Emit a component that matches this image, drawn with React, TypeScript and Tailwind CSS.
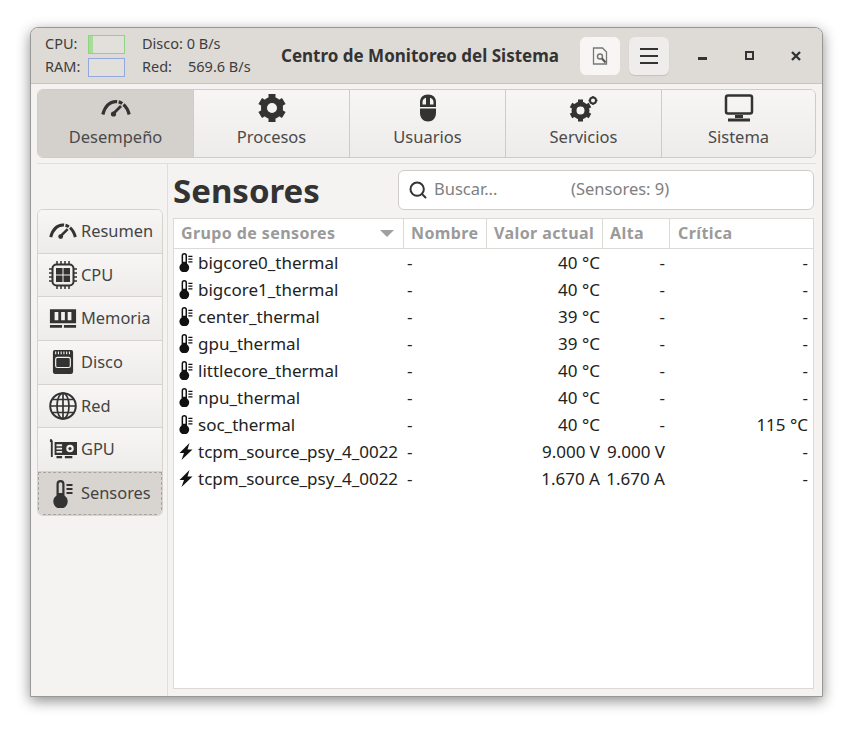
import { Search } from 'lucide-react';
import type { ReactNode } from 'react';

const font = { fontFamily: '"Noto Sans", sans-serif' };

function Gauge({ className }: { className: string }) {
    return (
        <svg viewBox="0 0 30 18" className={className} fill="none" stroke="#333333">
            <path d="M1.800 15.500 C4 7 9 2.800 15 2.500 C21 2.800 26 7 28.200 15.500" strokeWidth="3.200" strokeDasharray="21 1.500 4 1.500 30" />
            <path d="M20 7 L13 14" strokeWidth="2.800" />
            <circle cx="12.5" cy="15" r="2.6" fill="#333333" stroke="none" />
        </svg>
    );
}

function Gear({ className }: { className: string }) {
    return (
        <svg viewBox="0 0 28 30" className={className} fill="none" stroke="#333333">
            <circle cx="14" cy="15" r="8" strokeWidth="6" />
            <path d="M14 1v6M14 23v6M2.200 8l5 3M20.800 19l5 3M2.200 22l5-3M20.800 11l5-3" strokeWidth="7" />
        </svg>
    );
}

function Mouse({ className }: { className: string }) {
    return (
        <svg viewBox="0 0 18 28" className={className}>
            <path d="M9 0.5C4 0.5 1 3.5 1 8v11c0 5 3.5 8.5 8 8.5s8-3.5 8-8.5V8c0-4.500-3-7.500-8-7.500z" fill="#333333" />
            <path d="M3.500 10.500V8c0-2 1-3.500 3.500-4.300V10.500zM14.500 10.500V8c0-2-1-3.500-3.500-4.300V10.500z" fill="#f4f3f2" />
            <path d="M1 13h16v1.400H1z" fill="#f4f3f2" />
        </svg>
    );
}

function Gears({ className }: { className: string }) {
    return (
        <svg viewBox="0 0 30 28" className={className} fill="none" stroke="#333333">
            <circle cx="11.500" cy="16" r="6.500" strokeWidth="5" />
            <path d="M11.500 5v4M11.500 23v4M2 10.500l3.500 2M17.500 19.500l3.500 2M2 21.500l3.500-2M17.500 12.500l3.500-2" strokeWidth="5" />
            <circle cx="24" cy="6" r="3" strokeWidth="2" />
            <path d="M24 1.500v1.500M24 9v1.500M19.500 6H21M27 6h1.500" strokeWidth="1.500" />
        </svg>
    );
}

function Monitor({ className }: { className: string }) {
    return (
        <svg viewBox="0 0 30 28" className={className} fill="none">
            <rect x="2" y="1.500" width="26" height="18" rx="2" stroke="#333333" strokeWidth="2.500" />
            <path d="M11 21h8v3h-8z M4 24.500h22v3H4z" fill="#333333" />
        </svg>
    );
}

function Chip({ className }: { className: string }) {
    return (
        <svg viewBox="0 0 28 28" className={className} fill="none" stroke="#333333">
            <rect x="3.500" y="3.500" width="21" height="21" rx="4" strokeWidth="2" />
            <path d="M7 7h6.500v6.500H7zM14.500 7H21v6.500h-6.500zM7 14.500h6.500V21H7zM14.500 14.500H21V21h-6.500z" fill="#333333" stroke="none" />
            <path d="M8 0v3M12 0v3M16 0v3M20 0v3M8 25v3M12 25v3M16 25v3M20 25v3M0 8h3M0 12h3M0 16h3M0 20h3M25 8h3M25 12h3M25 16h3M25 20h3" strokeWidth="1.500" />
        </svg>
    );
}

function Ram({ className }: { className: string }) {
    return (
        <svg viewBox="0 0 30 22" className={className}>
            <path fillRule="evenodd" d="M1 1h28v15H1zM6 4v9h4V4zM13 4v9h4V4zM20 4v9h4V4z" fill="#333333" />
            <path d="M1 18h13v3H1zM16 18h13v3H16z" fill="#333333" />
        </svg>
    );
}

function Disk({ className }: { className: string }) {
    return (
        <svg viewBox="0 0 24 28" className={className}>
            <rect x="1" y="1" width="22" height="26" rx="2" fill="#333333" />
            <path d="M4 2.500v3M7 2.500v3M10 2.500v3M13 2.500v3M16 2.500v3M19 2.500v3" stroke="#f4f3f2" strokeWidth="1.200" />
            <rect x="4" y="9" width="16" height="11" rx="2" fill="none" stroke="#f4f3f2" strokeWidth="1.300" />
        </svg>
    );
}

function Globe({ className }: { className: string }) {
    return (
        <svg viewBox="0 0 28 28" className={className} fill="none" stroke="#333333" strokeWidth="1.700">
            <circle cx="14" cy="14" r="12.800" strokeWidth="2" />
            <ellipse cx="14" cy="14" rx="6" ry="12.800" />
            <path d="M14 1v26M1.500 14h25M3.500 7.500h21M3.500 20.500h21" />
        </svg>
    );
}

function Gpu({ className }: { className: string }) {
    return (
        <svg viewBox="0 0 30 22" className={className}>
            <path d="M1 0h2l1 2v17H2V3H1z" fill="#333333" />
            <path fillRule="evenodd" d="M6 3h24v14H6zM8 5.500v2h6v-2zM8 9v2h6V9zM8 12.500v2h6v-2zM22.500 6a4 4 0 1 0 0 8a4 4 0 0 0 0-8z" fill="#333333" />
            <circle cx="22.500" cy="10" r="1.700" fill="#333333" />
            <path d="M8 18h6v2.500H8zM17 18h8v2.500h-8z" fill="#333333" />
        </svg>
    );
}

function Thermo({ className, color = '#333333', hole = '#d8d4d0' }: { className: string; color?: string; hole?: string }) {
    return (
        <svg viewBox="0 0 20 28" className={className}>
            <path d="M3.500 4a4 4 0 0 1 8 0V15.400a7.200 7.200 0 1 1-8 0z" fill={color} />
            <path d="M5.700 4a1.800 1.800 0 0 1 3.600 0V13H5.700z" fill={hole} />
            <path d="M13.500 5h6M13.500 9h6M13.500 13h6" stroke={color} strokeWidth="1.800" />
        </svg>
    );
}

function Bolt({ className }: { className: string }) {
    return (
        <svg viewBox="0 0 14 17" className={className}>
            <path d="M10.500 0 L0.500 10 H5 L2.500 17 L13.500 6.500 H8.500 Z" fill="#111111" />
        </svg>
    );
}

function ReportIcon() {
    return (
        <svg viewBox="0 0 16 18" className="h-[18px] w-4" fill="none" stroke="#777777">
            <path d="M1.500 1h9l4 4v12h-13z" strokeWidth="1.300" />
            <circle cx="8" cy="9.500" r="2.500" strokeWidth="1.500" />
            <path d="M10 11.500l3.500 4" stroke="#555555" strokeWidth="2" />
        </svg>
    );
}

const tabs: { label: string; icon: ReactNode; width: string }[] = [
    { label: 'Desempeño', icon: <Gauge className="h-[18px] w-[30px]" />, width: 'w-[155px]' },
    { label: 'Procesos', icon: <Gear className="h-[30px] w-7" />, width: 'w-[156px]' },
    { label: 'Usuarios', icon: <Mouse className="h-7 w-[18px]" />, width: 'w-[156px]' },
    { label: 'Servicios', icon: <Gears className="h-[29px] w-[30px]" />, width: 'w-[156px]' },
    { label: 'Sistema', icon: <Monitor className="h-7 w-[30px]" />, width: 'flex-1' },
];

const sideItems: { label: string; icon: ReactNode }[] = [
    { label: 'Resumen', icon: <Gauge className="h-[18px] w-7" /> },
    { label: 'CPU', icon: <Chip className="h-7 w-7" /> },
    { label: 'Memoria', icon: <Ram className="h-[21px] w-7" /> },
    { label: 'Disco', icon: <Disk className="h-7 w-[22px]" /> },
    { label: 'Red', icon: <Globe className="h-7 w-7" /> },
    { label: 'GPU', icon: <Gpu className="h-[21px] w-7" /> },
];

const rows = [
    { group: 'bigcore0_thermal', value: '40 °C', high: '-', crit: '-', kind: 't' },
    { group: 'bigcore1_thermal', value: '40 °C', high: '-', crit: '-', kind: 't' },
    { group: 'center_thermal', value: '39 °C', high: '-', crit: '-', kind: 't' },
    { group: 'gpu_thermal', value: '39 °C', high: '-', crit: '-', kind: 't' },
    { group: 'littlecore_thermal', value: '40 °C', high: '-', crit: '-', kind: 't' },
    { group: 'npu_thermal', value: '40 °C', high: '-', crit: '-', kind: 't' },
    { group: 'soc_thermal', value: '40 °C', high: '-', crit: '115 °C', kind: 't' },
    { group: 'tcpm_source_psy_4_0022', value: '9.000 V', high: '9.000 V', crit: '-', kind: 'b' },
    { group: 'tcpm_source_psy_4_0022', value: '1.670 A', high: '1.670 A', crit: '-', kind: 'b' },
];

export default function App() {
    return (
        <div className="h-[731px] w-[853px] overflow-hidden bg-white pl-[30px] pt-[27px]" style={font}>
            <div className="flex h-[670px] w-[793px] flex-col overflow-hidden rounded-t-[8px] border border-[#9a9895] bg-[#f4f3f2] text-[#3d3d3d] shadow-[0_4px_14px_rgba(0,0,0,0.45)]">
                {/* Header bar */}
                <div className="flex h-[56px] shrink-0 items-center border-b border-[#c8c5c0] bg-[#dedbd7] pl-[14px] pr-[7px] text-[14.500px]">
                    <div className="w-[219px]">
                        <div className="flex h-[23px] items-center">
                            <span className="w-[43px]">CPU:</span>
                            <div className="h-[19px] w-[37px] border border-[#8fd480] bg-[#e2e0da]">
                                <div className="h-full w-1 bg-[#a8dc98]" />
                            </div>
                            <span className="ml-[17px] whitespace-nowrap">Disco: 0 B/s</span>
                        </div>
                        <div className="flex h-[23px] items-center">
                            <span className="w-[43px]">RAM:</span>
                            <div className="h-[19px] w-[37px] border border-[#94a8e0] bg-[#e2e0da]" />
                            <span className="ml-[17px] w-[46px]">Red:</span>
                            <span className="whitespace-nowrap">569.6 B/s</span>
                        </div>
                    </div>
                    <div className="w-[316px] whitespace-nowrap pl-[17px] text-[17px] font-bold text-[#333333]">Centro de Monitoreo del Sistema</div>
                    <div className="flex h-[38px] w-[40px] items-center justify-center rounded-[6px] bg-[#f7f6f5]">
                        <ReportIcon />
                    </div>
                    <div className="ml-[9px] flex h-[38px] w-[40px] items-center justify-center rounded-[6px] bg-[#efedeb] shadow-[0_1px_1px_rgba(0,0,0,0.12)]">
                        <div className="flex w-[18px] flex-col gap-[5px]">
                            <div className="h-[2px] bg-[#333333]" />
                            <div className="h-[2px] bg-[#333333]" />
                            <div className="h-[2px] bg-[#333333]" />
                        </div>
                    </div>
                    <div className="ml-[29px] flex flex-1 items-center justify-between pr-[14px]">
                        <div className="mt-[6px] h-[3px] w-[9px] bg-[#333333]" />
                        <div className="h-[9px] w-[9px] border-2 border-[#333333]" />
                        <svg viewBox="0 0 10 10" className="h-[10px] w-[10px]" stroke="#333333" strokeWidth="2.400">
                            <path d="M1 1l8 8M9 1l-8 8" />
                        </svg>
                    </div>
                </div>

                {/* Page tabs */}
                <div className="mx-[6px] mt-[5px] flex h-[69px] shrink-0 overflow-hidden rounded-[6px] border border-[#cfccc8] text-[16.500px] text-[#4a4a4a]">
                    {tabs.map((tab, i) => (
                        <div
                            key={tab.label}
                            className={`flex flex-col items-center ${tab.width} ${i === 0 ? 'bg-[#d4d1cd]' : 'border-l border-[#cfccc8] bg-linear-to-b from-[#f7f6f5] to-[#eeecea]'}`}
                        >
                            <div className="flex h-[33px] items-center pt-[3px]">{tab.icon}</div>
                            <div className="mt-[1px] leading-[26px]">{tab.label}</div>
                        </div>
                    ))}
                </div>
                <div className="mx-[6px] mt-[5px] h-px shrink-0 bg-[#e0dedb]" />

                {/* Body */}
                <div className="flex min-h-0 flex-1">
                    <div className="w-[136px] shrink-0 pl-[6px] pr-[4px] pt-[45px]">
                        <div className="overflow-hidden rounded-[6px] border border-[#d6d3cf] text-[16.400px] text-[#444444]">
                            {sideItems.map((item) => (
                                <div key={item.label} className="flex h-[43.700px] items-center gap-[4px] border-b border-[#d6d3cf] bg-linear-to-b from-[#f7f6f5] to-[#eeecea] pl-[11px]">
                                    <div className="flex w-[28px] justify-center">{item.icon}</div>
                                    <span>{item.label}</span>
                                </div>
                            ))}
                            <div className="flex h-[43px] items-center gap-[4px] border border-dashed border-[#a8a5a0] bg-[#d8d4d0] pl-[10px]">
                                <div className="flex w-[28px] justify-center">
                                    <Thermo className="h-[28px] w-[20px]" />
                                </div>
                                <span>Sensores</span>
                            </div>
                        </div>
                    </div>
                    <div className="flex min-w-0 flex-1 flex-col border-l border-[#e0dedb] pb-[7px] pl-[5px] pr-[8px]">
                        <div className="flex h-[54px] shrink-0 items-center justify-between">
                            <div className="text-[33px] font-bold text-[#333333]">Sensores</div>
                            <div className="mb-[3px] flex h-[40px] w-[416px] items-center rounded-[6px] border border-[#cfccc8] bg-white pl-[9px] text-[16.500px] text-[#808080]">
                                <Search className="h-[20px] w-[20px] text-[#333333]" strokeWidth={2.400} />
                                <span className="ml-[6px] w-[137px]">Buscar...</span>
                                <span>(Sensores: 9)</span>
                            </div>
                        </div>
                        <div className="flex min-h-0 flex-1 flex-col border border-[#dcdad7] bg-white text-[17px] text-[#222222]">
                            <div className="flex h-[30px] shrink-0 items-center border-b border-[#dcdad7] text-[16px] font-bold tracking-[0.4px] text-[#9a9a9a]">
                                <div className="flex h-full w-[230px] items-center justify-between border-r border-[#dcdad7] pb-px pl-[7px] pr-[9px]">
                                    <span>Grupo de sensores</span>
                                    <div className="h-0 w-0 border-x-[7px] border-t-[7px] border-x-transparent border-t-[#a0a0a0]" />
                                </div>
                                <div className="flex h-full w-[83px] items-center border-r border-[#dcdad7] pb-px pl-[7px]">Nombre</div>
                                <div className="flex h-full w-[116px] items-center border-r border-[#dcdad7] pb-px pl-[7px]">Valor actual</div>
                                <div className="flex h-full w-[67px] items-center border-r border-[#dcdad7] pb-px pl-[7px]">Alta</div>
                                <div className="pb-px pl-[8px]">Crítica</div>
                            </div>
                            <div>
                                {rows.map((row, i) => (
                                    <div key={i} className="flex h-[27px] items-center">
                                        <div className="flex w-[230px] items-center pl-[5px]">
                                            <div className="flex w-[19px] shrink-0">
                                                {row.kind === 't' ? <Thermo className="h-[19px] w-[14px]" color="#111111" hole="#ffffff" /> : <Bolt className="h-[17px] w-[14px]" />}
                                            </div>
                                            <span className="whitespace-nowrap">{row.group}</span>
                                        </div>
                                        <div className="w-[83px] pl-[3px]">-</div>
                                        <div className="w-[114px] pr-[1px] text-right">{row.value}</div>
                                        <div className="w-[69px] pr-[5px] text-right">{row.high}</div>
                                        <div className="flex-1 pr-[5px] text-right">{row.crit}</div>
                                    </div>
                                ))}
                            </div>
                        </div>
                    </div>
                </div>
            </div>
        </div>
    );
}
